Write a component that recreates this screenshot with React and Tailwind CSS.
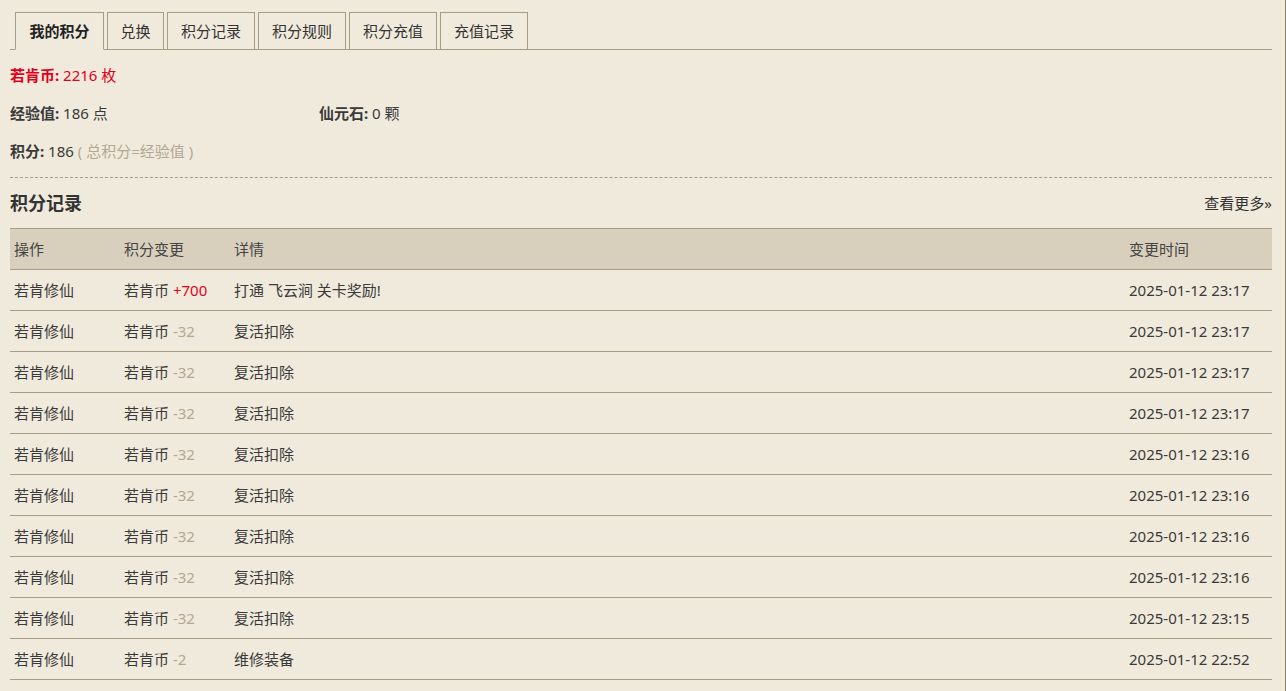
import React from 'react';

const tabs = [
  { label: '我的积分', w: 'w-[89px]', active: true },
  { label: '兑换', w: 'w-[57px]' },
  { label: '积分记录', w: 'w-[88px]' },
  { label: '积分规则', w: 'w-[88px]' },
  { label: '积分充值', w: 'w-[88px]' },
  { label: '充值记录', w: 'w-[88px]' },
];

const records = [
  { amount: '+700', up: true, detail: '打通 飞云涧 关卡奖励!', time: '2025-01-12 23:17' },
  { amount: '-32', detail: '复活扣除', time: '2025-01-12 23:17' },
  { amount: '-32', detail: '复活扣除', time: '2025-01-12 23:17' },
  { amount: '-32', detail: '复活扣除', time: '2025-01-12 23:17' },
  { amount: '-32', detail: '复活扣除', time: '2025-01-12 23:16' },
  { amount: '-32', detail: '复活扣除', time: '2025-01-12 23:16' },
  { amount: '-32', detail: '复活扣除', time: '2025-01-12 23:16' },
  { amount: '-32', detail: '复活扣除', time: '2025-01-12 23:16' },
  { amount: '-32', detail: '复活扣除', time: '2025-01-12 23:15' },
  { amount: '-2', detail: '维修装备', time: '2025-01-12 22:52' },
];

const App = () => {
  return (
    <div className="min-h-[691px] bg-[#f0eadd] border-r border-[#8c7f68] pl-[10px] pr-[13px] pt-[12px] text-[15px] text-[#3a3a3a] font-['Noto_Sans','Noto_Sans_CJK_SC',sans-serif]">
      {/* tabs */}
      <div className="flex gap-[3px] pl-[5px] border-b border-[#a89c86]">
        {tabs.map(tab => (
          <div
            key={tab.label}
            className={`${tab.w} h-[38px] flex items-center justify-center border border-[#a89c86] -mb-px ${tab.active ? 'border-b-[#f0eadd] font-bold text-[#222]' : 'text-[#333]'}`}
          >
            {tab.label}
          </div>
        ))}
      </div>

      {/* summary */}
      <div className="mt-[13px] flex flex-col gap-[14px] leading-[24px]">
        <div className="text-[#e2001a]">
          <span className="font-bold">若肯币:</span> 2216 枚
        </div>
        <div className="flex">
          <div className="w-[309px]">
            <span className="font-bold">经验值:</span> 186 点
          </div>
          <div>
            <span className="font-bold">仙元石:</span> 0 颗
          </div>
        </div>
        <div>
          <span className="font-bold">积分:</span> 186 <span className="text-[#b3a792]">( 总积分=经验值 )</span>
        </div>
      </div>

      <div className="mt-[14px] border-t border-dashed border-[#a89c86]"></div>

      {/* records heading */}
      <div className="h-[50px] flex items-center justify-between">
        <h2 className="text-[18px] font-bold text-[#333]">积分记录</h2>
        <span className="text-[#333]">查看更多»</span>
      </div>

      {/* table */}
      <div className="border-t border-[#a89c86]">
        <div className="flex h-[41px] items-center bg-[#d8d0bd] border-b border-[#a89c86] text-[#444]">
          <div className="w-[110px] pl-[4px]">操作</div>
          <div className="w-[110px] pl-[4px]">积分变更</div>
          <div className="flex-1 pl-[4px]">详情</div>
          <div className="w-[147px] pl-[4px]">变更时间</div>
        </div>
        {records.map((r, i) => (
          <div key={i} className="flex h-[41px] items-center border-b border-[#a89c86]">
            <div className="w-[110px] pl-[4px]">若肯修仙</div>
            <div className="w-[110px] pl-[4px]">
              若肯币 <span className={r.up ? 'text-[#e2001a]' : 'text-[#b3a792]'}>{r.amount}</span>
            </div>
            <div className="flex-1 pl-[4px]">{r.detail}</div>
            <div className="w-[147px] pl-[4px]">{r.time}</div>
          </div>
        ))}
      </div>
    </div>
  );
};

export default App;
